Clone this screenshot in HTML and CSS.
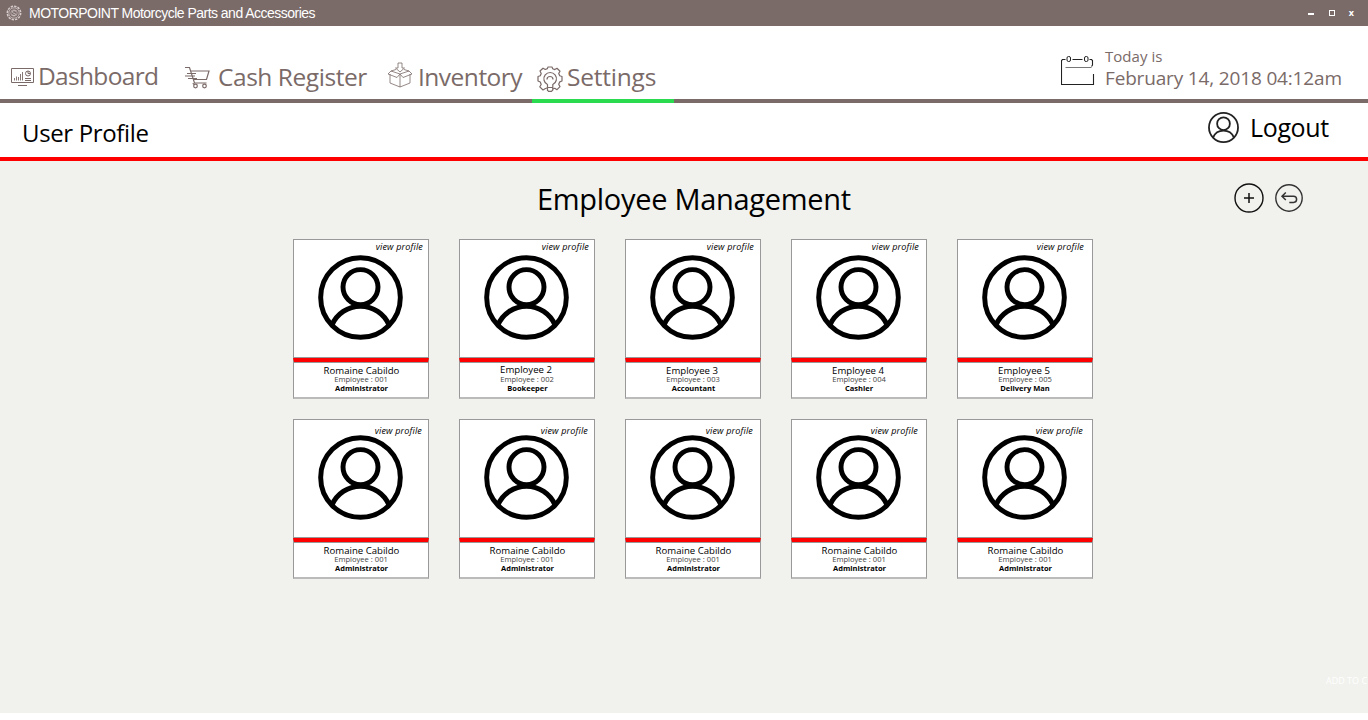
FILE: index.html
```
<!DOCTYPE html>
<html lang="en">
<head>
<meta charset="utf-8">
<title>MOTORPOINT Motorcycle Parts and Accessories</title>
<link rel="stylesheet" href="styles.css">
</head>
<body>
<svg class="defs" width="0" height="0">
  <symbol id="avatar" viewBox="0 0 86 86">
    <g fill="none" stroke="currentColor">
      <circle cx="43" cy="43" r="40.3"/>
      <circle cx="43" cy="32.5" r="17.7"/>
      <path d="M14 71A31.5 31.5 0 0 1 72 71"/>
    </g>
  </symbol>
</svg>
<header class="titlebar">
  <svg class="app-icon" viewBox="0 0 16 16" fill="none" stroke="#d5cccb">
    <circle cx="8" cy="8" r="6.7" stroke-width="1.5" stroke-dasharray="2.4 1.1"/>
    <circle cx="8" cy="8" r="5.2" stroke-width=".7"/>
    <circle cx="8" cy="8" r="3.2" stroke-width=".6"/>
    <path d="M10 6.3C8 5 6 6 6.500 7.300S10 8.200 9.600 9.500S7 10.700 5.800 9.500" stroke-width=".9"/>
  </svg>
  <span class="app-name">MOTORPOINT Motorcycle Parts and Accessories</span>
  <div class="window-controls"><i class="min"></i><i class="max"></i><span class="close">x</span></div>
</header>
<nav class="nav">
  <a class="tab dashboard">
    <svg width="24" height="20" viewBox="0 0 24 20" fill="none" stroke="#7a6a68">
      <path d="M1.500 1.500H23.500V15.500H1.500Z" stroke-width="1"/><path d="M8 18.500H17" stroke-width="1"/>
      <path d="M4.500 13.500V11M6.500 13.500V9.500M8.500 13.500V10M10.500 13.500V7M12.500 13.500V5" stroke-width=".9"/>
      <circle cx="18" cy="6.500" r="2.500" stroke-width="1"/><path d="M18 4V6.500H20.500M15 11.500H21M15 13.500H21" stroke-width="1"/>
    </svg><span>Dashboard</span></a>
  <a class="tab register">
    <svg width="26" height="24" viewBox="0 0 26 24" fill="none" stroke="#7a6a68" stroke-width="1.200">
      <path d="M1 1.500H5.500L10.500 17H22.500M7 5H25L22.500 13.500H9.500M3 7.500H12M1 10H11M4 12.500H13M9 17Q9 18.500 11 18.500"/>
      <circle cx="11.500" cy="20" r="1.800"/><circle cx="20.500" cy="20" r="1.800"/>
    </svg><span>Cash Register</span></a>
  <a class="tab inventory">
    <svg width="26" height="26" viewBox="0 0 26 26" fill="none" stroke="#7a6a68" stroke-width=".8">
      <path d="M11 1H15V6H17.500L13 10L8.500 6H11ZM3 12V21L13 25L23 21V12M13 13V25M13 12L4 9L1 12L10 15.500L13 12L16 15.500L25 12L22 9L13 12M4 9L9 7.500M22 9L17 7.500"/>
    </svg><span>Inventory</span></a>
  <a class="tab settings active">
    <svg width="26" height="26" viewBox="0 0 26 26" fill="none" stroke="#7a6a68" stroke-width="1.200" stroke-linejoin="round">
      <path d="M10.500 21.800L8 22.800L6 24L2.800 20.800L4.200 18.500L3.300 16L1 15V10.500L3.300 9.800L4.200 7.500L3 5L6 2.200L8.300 3.500L10.400 2.600L11 1H15L15.700 2.800L17.800 3.600L20 2.300L23 5.200L21.700 7.500L22.700 9.800L25 10.500V15L22.700 15.900L21.700 18.300L23 20.600L20 23.700L17.800 22.300L15.500 23"/>
      <path d="M10.500 25V18.500A6.300 6.300 0 1 1 15.800 18.500V24L14.500 25.300H11.500L10.500 24.200M10 13.500A3 3 0 1 1 16 13.500M10.500 21.500H15.500"/>
    </svg><span>Settings</span></a>
  <div class="today">
    <svg width="34" height="31" viewBox="0 0 34 31" fill="none" stroke="#222">
      <path d="M4.500 4.500H1.500L.5 5.500V29.500H32.500V19M11.500 4.500H21.500M28.500 4.500H30.500L31.500 5.500V10L30.500 11.500" stroke-width="1.100"/>
      <path d="M4.500 12.500H30.500" stroke="#777"/>
      <rect x="6" y="1.500" width="3.500" height="5" rx="1.500"/><rect x="23.500" y="1.500" width="3.500" height="5" rx="1.500"/>
    </svg>
    <div><div class="today-label">Today is</div><div class="today-date">February 14, 2018 04:12am</div></div>
  </div>
</nav>
<section class="subheader">
  <h2>User Profile</h2>
  <a class="logout"><svg class="avatar-small"><use href="#avatar"/></svg><span>Logout</span></a>
</section>
<main class="main">
  <div class="heading">
    <h1>Employee Management</h1>
    <div class="actions">
      <svg width="30" height="30" viewBox="0 0 30 30" fill="none" stroke="#111"><circle cx="15" cy="15" r="14" stroke-width="1.400"/><path d="M15 10V20M10 15H20" stroke-width="1.500"/></svg>
      <svg width="28" height="28" viewBox="0 0 28 28" fill="none" stroke="#333"><circle cx="14" cy="14" r="13.200" stroke-width="1.400"/><path d="M10.800 8.500L7 12.200L10.800 16M7 12.200H18.500A3.100 3.100 0 0 1 18.500 18.400H14.300" stroke-width="1.500"/></svg>
    </div>
  </div>
  <div class="grid">
    <article class="card"><div class="photo"><a class="view">view profile</a><svg class="avatar"><use href="#avatar"/></svg></div><div class="info"><b class="name">Romaine Cabildo</b><span class="id">Employee : 001</span><strong class="role">Administrator</strong></div></article>
    <article class="card"><div class="photo"><a class="view">view profile</a><svg class="avatar"><use href="#avatar"/></svg></div><div class="info raised"><b class="name short">Employee 2</b><span class="id">Employee : 002</span><strong class="role">Bookeeper</strong></div></article>
    <article class="card"><div class="photo"><a class="view">view profile</a><svg class="avatar"><use href="#avatar"/></svg></div><div class="info"><b class="name short">Employee 3</b><span class="id">Employee : 003</span><strong class="role">Accountant</strong></div></article>
    <article class="card"><div class="photo"><a class="view">view profile</a><svg class="avatar"><use href="#avatar"/></svg></div><div class="info"><b class="name short">Employee 4</b><span class="id">Employee : 004</span><strong class="role cashier">Cashier</strong></div></article>
    <article class="card"><div class="photo"><a class="view">view profile</a><svg class="avatar"><use href="#avatar"/></svg></div><div class="info"><b class="name short">Employee 5</b><span class="id">Employee : 005</span><strong class="role delivery">Delivery Man</strong></div></article>
    <article class="card low"><div class="photo"><a class="view">view profile</a><svg class="avatar"><use href="#avatar"/></svg></div><div class="info"><b class="name">Romaine Cabildo</b><span class="id">Employee : 001</span><strong class="role">Administrator</strong></div></article>
    <article class="card low"><div class="photo"><a class="view">view profile</a><svg class="avatar"><use href="#avatar"/></svg></div><div class="info"><b class="name">Romaine Cabildo</b><span class="id">Employee : 001</span><strong class="role">Administrator</strong></div></article>
    <article class="card low"><div class="photo"><a class="view">view profile</a><svg class="avatar"><use href="#avatar"/></svg></div><div class="info"><b class="name">Romaine Cabildo</b><span class="id">Employee : 001</span><strong class="role">Administrator</strong></div></article>
    <article class="card low"><div class="photo"><a class="view">view profile</a><svg class="avatar"><use href="#avatar"/></svg></div><div class="info"><b class="name">Romaine Cabildo</b><span class="id">Employee : 001</span><strong class="role">Administrator</strong></div></article>
    <article class="card low"><div class="photo"><a class="view">view profile</a><svg class="avatar"><use href="#avatar"/></svg></div><div class="info"><b class="name">Romaine Cabildo</b><span class="id">Employee : 001</span><strong class="role">Administrator</strong></div></article>
  </div>
  <div class="add">ADD TO C</div>
</main>
</body>
</html>
```
FILE: styles.css
```
* { box-sizing: border-box; margin: 0; padding: 0; }
body { width: 1368px; height: 720px; overflow: hidden; background: #fff; font-family: "Open Sans", "Noto Sans", sans-serif; white-space: nowrap; }
svg { display: block; flex: none; }
.defs { position: absolute; }

.titlebar { height: 26px; background: #7a6a68; color: #fff; display: flex; align-items: center; padding: 0 14px 0 6px; }
.app-icon { width: 16px; height: 16px; margin-right: 7px; }
.app-name { font: 14px/26px "Liberation Sans", Arial, sans-serif; letter-spacing: -.52px; }
.window-controls { margin-left: auto; display: flex; align-items: center; height: 26px; }
.min { width: 6px; height: 2px; background: #fff; margin: 2px 15px 0 0; }
.max { width: 6px; height: 6px; border: 1px solid #fff; margin-right: 14px; }
.close { font: bold 9px/26px "Open Sans", sans-serif; }

.nav { height: 77px; border-bottom: 4px solid #7a6a68; display: flex; color: #7a6a68; }
.tab { height: 77px; display: flex; font-size: 24.500px; line-height: 34px; padding-top: 33px; }
.dashboard { width: 174px; padding-left: 10px; letter-spacing: -.68px; }
.dashboard svg { margin: 8px 4px 0 0; }
.register { width: 204px; padding-left: 10px; letter-spacing: -.45px; }
.register svg { margin: 7px 8px 0 0; }
.register span, .inventory span, .settings span { margin-top: 1px; }
.inventory { width: 154px; padding-left: 9px; letter-spacing: -.5px; }
.inventory svg { margin: 3px 5px 0 0; }
.settings { width: 142px; padding-left: 5px; letter-spacing: -.22px; }
.settings svg { margin: 7px 4px 0 0; }
.active { border-bottom: 4px solid #2bdb4f; }
.today { margin-left: auto; width: 307px; display: flex; padding-top: 20px; }
.today svg { margin: 9px 10px 0 0; }
.today-label { font-size: 15px; line-height: 21px; letter-spacing: .04px; }
.today-date { font-size: 19px; line-height: 22px; letter-spacing: -.16px; }

.subheader { height: 58px; border-bottom: 4px solid #f00; display: flex; justify-content: space-between; padding-left: 22px; color: #000; }
h2 { font-weight: 400; font-size: 24px; line-height: 34px; padding-top: 13px; letter-spacing: -.35px; }
.logout { display: flex; width: 160px; font-size: 25px; line-height: 34px; padding-top: 7px; letter-spacing: -.35px; }
.logout span { margin-left: 11px; }
.avatar-small { width: 31px; height: 31px; margin-top: 2px; stroke-width: 5; color: #222; }

.main { height: 552px; background: #f1f2ed; position: relative; }
.heading { height: 78px; display: flex; }
h1 { font-size: 29px; line-height: 40px; font-weight: 400; padding-top: 18px; margin-left: 537px; letter-spacing: -.3px; }
.actions { margin-left: auto; width: 134px; padding-top: 22px; display: flex; gap: 11px; }
.actions svg + svg { margin-top: 1px; }
.grid { display: grid; grid-template-columns: repeat(5, 136px); gap: 20px 30px; margin-left: 293px; }
.card { height: 160px; color: #000; }
.photo { height: 119px; background: #fff; border: 1px solid #999; }
.view { display: block; height: 15px; font: italic 9px/13px "Open Sans", sans-serif; text-align: right; padding-right: 5px; letter-spacing: .17px; }
.low .view { line-height: 21px; transform: translateX(-1px); }
.card:nth-child(5n+3) .view { padding-right: 6px; }
.card:nth-child(5n+4) .view { padding-right: 7px; }
.card:nth-child(5n) .view { padding-right: 8px; }
.avatar { width: 85px; height: 85px; margin-left: 23.5px; stroke-width: 5; }
.info { height: 41px; background: #fff; border: 1px solid #999; border-top: 4px solid #f00; border-bottom: 2px solid #bbb; box-shadow: inset 0 1px #999; text-align: center; }
.info > * { display: block; }
.name { font-weight: 400; font-size: 9.600px; line-height: 12px; padding: 3px 0 0 1px; height: 13px; }
.raised .name { padding-top: 2px; }
.name.short { padding-right: 3px; }
.id { font-size: 7.600px; line-height: 8px; color: #444; }
.role { font-size: 7.500px; line-height: 9px; padding: 1px 0 0 1px; }
.cashier, .delivery { padding-left: 0; }
.add { position: absolute; right: 0; bottom: 25px; width: 42px; overflow: hidden; color: #fff; font-size: 9px; line-height: 14px; }
```
